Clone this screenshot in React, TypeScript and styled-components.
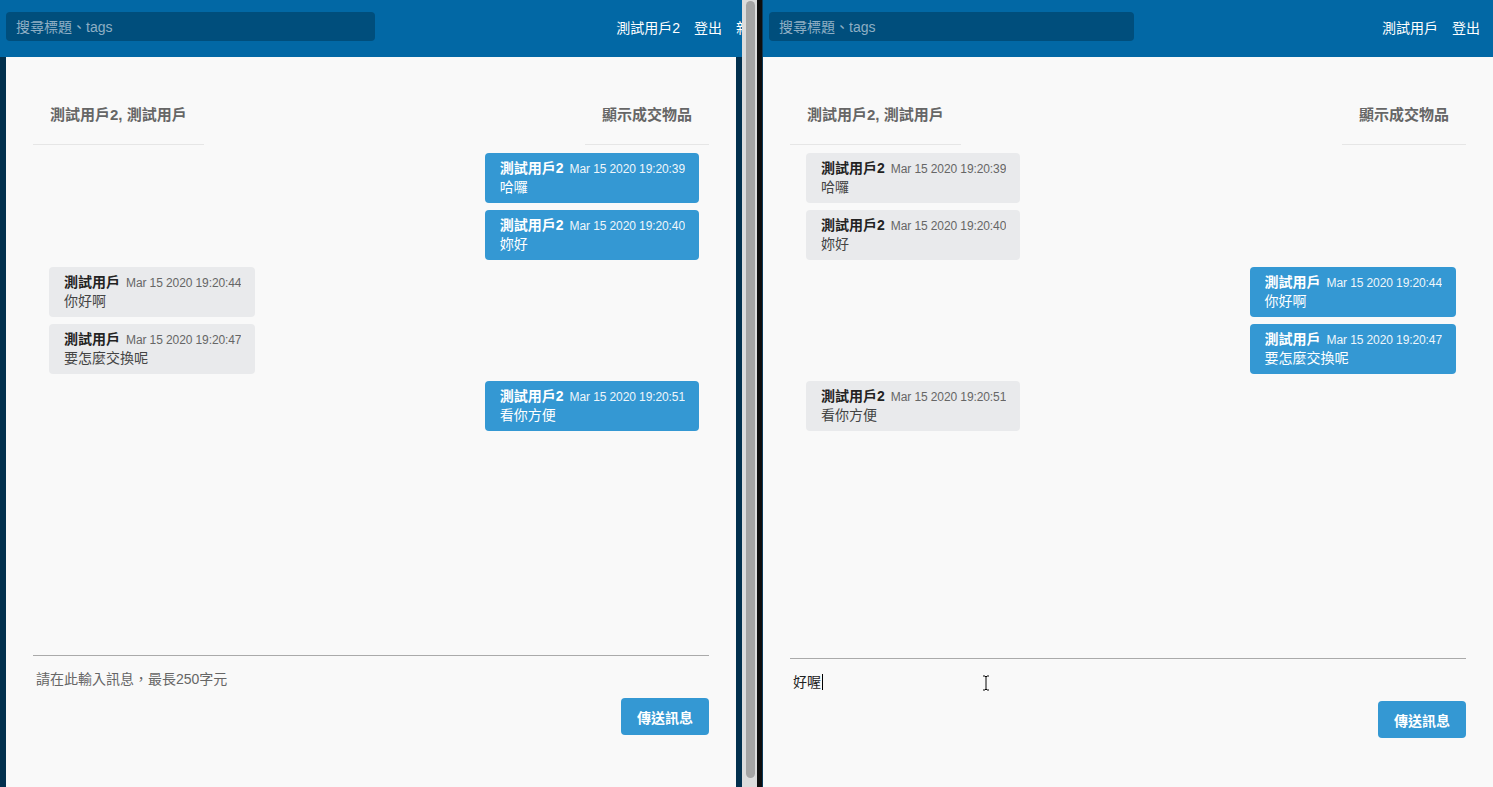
import React from 'react'
import styled, { createGlobalStyle } from 'styled-components'

const FONT = `"Liberation Sans", "Noto Sans CJK TC", sans-serif`

const GlobalStyle = createGlobalStyle`
  html, body {
    margin: 0;
    padding: 0;
    background: #111;
    font-family: ${FONT};
  }
`

const Desktop = styled.div`
  display: flex;
  width: 1493px;
  height: 787px;
  overflow: hidden;
`

const BrowserWindow = styled.div<{ $width: number, $edge?: boolean }>`
  display: flex;
  flex-direction: column;
  width: ${p => p.$width}px;
  flex-shrink: 0;
  height: 100%;
  overflow: hidden;
  box-sizing: border-box;
  border-left: ${p => p.$edge ? '1px solid #0b3a5a' : 'none'};
`

const Header = styled.header<{ $bleed?: number }>`
  display: flex;
  align-items: center;
  justify-content: space-between;
  box-sizing: border-box;
  width: calc(100% + ${p => p.$bleed || 0}px);
  height: 57px;
  flex-shrink: 0;
  padding: 12px 13px 16px 6px;
  background: #0268a5;
`

const Search = styled.input<{ $width: number }>`
  width: ${p => p.$width}px;
  height: 29px;
  box-sizing: border-box;
  border: none;
  border-radius: 4px;
  padding: 0 10px;
  background: #004e7c;
  color: #fff;
  font-family: ${FONT};
  font-size: 14px;
  outline: none;
  &::placeholder {
    color: #8eaec4;
  }
`

const Nav = styled.nav`
  display: flex;
  gap: 14px;
  flex-shrink: 0;
`

const NavLink = styled.a`
  color: #fff;
  font-size: 14px;
  white-space: nowrap;
  text-decoration: none;
`

const Body = styled.main<{ $framed?: boolean }>`
  flex: 1;
  display: flex;
  flex-direction: column;
  box-sizing: border-box;
  min-height: 0;
  padding: 27px 27px 0;
  background: #f9f9f9;
  border-left: ${p => p.$framed ? '6px solid #02304e' : 'none'};
  border-right: ${p => p.$framed ? '6px solid #02304e' : 'none'};
`

const ChatHeader = styled.div`
  display: flex;
  justify-content: space-between;
`

const Tab = styled.div`
  padding: 20px 17px 19px;
  font-size: 15px;
  line-height: 21px;
  font-weight: bold;
  color: #666;
  border-bottom: 1px solid #e6e6e6;
`

const MessageList = styled.div`
  flex: 1;
  display: flex;
  flex-direction: column;
  gap: 7px;
  padding: 8px 10px 0 16px;
`

const Bubble = styled.div<{ $mine: boolean }>`
  align-self: ${p => p.$mine ? 'flex-end' : 'flex-start'};
  display: flex;
  flex-direction: column;
  padding: 6px 14px 6px 15px;
  border-radius: 4px;
  background: ${p => p.$mine ? '#3498d3' : '#e9eaec'};
  color: ${p => p.$mine ? '#fff' : '#444'};
`

const NameRow = styled.div`
  display: flex;
  align-items: baseline;
  gap: 6px;
  height: 19px;
  line-height: 19px;
  overflow: hidden;
`

const Sender = styled.span<{ $mine: boolean }>`
  font-size: 14px;
  font-weight: bold;
  color: ${p => p.$mine ? '#fff' : '#222'};
`

const Stamp = styled.span<{ $mine: boolean }>`
  font-size: 12px;
  letter-spacing: -0.1px;
  color: ${p => p.$mine ? '#eef6fb' : '#666'};
`

const Text = styled.div`
  height: 19px;
  font-size: 14px;
  line-height: 19px;
`

const Composer = styled.div<{ $bottom: number }>`
  position: relative;
  display: flex;
  flex-direction: column;
  border-top: 1px solid #aaa;
  margin-bottom: ${p => p.$bottom}px;
`

const Field = styled.div`
  height: 34px;
  box-sizing: border-box;
  padding: 13px 3px 0;
  font-size: 14px;
  line-height: 20px;
  color: #222;
`

const Placeholder = styled.span`
  color: #666;
`

const Caret = styled.span`
  display: inline-block;
  width: 1px;
  height: 16px;
  margin-left: 1px;
  vertical-align: -3px;
  background: #000;
`

const MouseCursor = styled.svg`
  position: absolute;
  left: 192px;
  top: 16px;
`

const SendButton = styled.button`
  align-self: flex-end;
  margin-top: 8px;
  width: 88px;
  height: 37px;
  border: none;
  border-radius: 4px;
  background: #3498d3;
  color: #fff;
  font-family: ${FONT};
  font-size: 14px;
  font-weight: bold;
`

const Scrollbar = styled.div`
  width: 15px;
  flex-shrink: 0;
  box-sizing: border-box;
  padding: 1px 2px 9px 4px;
  background: #dcdcdc;
`

const Thumb = styled.div`
  height: 100%;
  border-radius: 5px;
  background: #a4a4a4;
`

const Gap = styled.div`
  width: 5px;
  flex-shrink: 0;
  background: #0e0e0e;
`

interface Msg {
  from: string
  time: string
  text: string
}

const USER2 = '測試用戶2'
const USER = '測試用戶'

const messages: Msg[] = [
  { from: USER2, time: 'Mar 15 2020 19:20:39', text: '哈囉' },
  { from: USER2, time: 'Mar 15 2020 19:20:40', text: '妳好' },
  { from: USER, time: 'Mar 15 2020 19:20:44', text: '你好啊' },
  { from: USER, time: 'Mar 15 2020 19:20:47', text: '要怎麼交換呢' },
  { from: USER2, time: 'Mar 15 2020 19:20:51', text: '看你方便' },
]

const ChatPane: React.FC<{ me: string, draft?: string, bottom: number }> = ({ me, draft, bottom }) => (
  <>
    <ChatHeader>
      <Tab>測試用戶2, 測試用戶</Tab>
      <Tab>顯示成交物品</Tab>
    </ChatHeader>
    <MessageList>
      {messages.map((m, i) => {
        const mine = m.from === me
        return (
          <Bubble key={i} $mine={mine}>
            <NameRow>
              <Sender $mine={mine}>{m.from}</Sender>
              <Stamp $mine={mine}>{m.time}</Stamp>
            </NameRow>
            <Text>{m.text}</Text>
          </Bubble>
        )
      })}
    </MessageList>
    <Composer $bottom={bottom}>
      <Field>
        {draft
          ? <>{draft}<Caret /></>
          : <Placeholder>請在此輸入訊息，最長250字元</Placeholder>}
      </Field>
      {draft && (
        <MouseCursor width="8" height="16" viewBox="0 0 8 16">
          <path d="M1 1h2l1 1 1-1h2M4 2v12M1 15h2l1-1 1 1h2" fill="none" stroke="#fff" strokeWidth="2.2" />
          <path d="M1 1h2l1 1 1-1h2M4 2v12M1 15h2l1-1 1 1h2" fill="none" stroke="#000" strokeWidth="1" />
        </MouseCursor>
      )}
      <SendButton>傳送訊息</SendButton>
    </Composer>
  </>
)

export default function App() {
  return (
    <>
      <GlobalStyle />
      <Desktop>
        <BrowserWindow $width={742}>
          <Header $bleed={63}>
            <Search $width={369} placeholder="搜尋標題、tags" />
            <Nav>
              <NavLink>測試用戶2</NavLink>
              <NavLink>登出</NavLink>
              <NavLink>新增物品</NavLink>
            </Nav>
          </Header>
          <Body $framed>
            <ChatPane me={USER2} bottom={52} />
          </Body>
        </BrowserWindow>
        <Scrollbar>
          <Thumb />
        </Scrollbar>
        <Gap />
        <BrowserWindow $width={731} $edge>
          <Header>
            <Search $width={365} placeholder="搜尋標題、tags" />
            <Nav>
              <NavLink>測試用戶</NavLink>
              <NavLink>登出</NavLink>
            </Nav>
          </Header>
          <Body>
            <ChatPane me={USER} draft="好喔" bottom={49} />
          </Body>
        </BrowserWindow>
      </Desktop>
    </>
  )
}
